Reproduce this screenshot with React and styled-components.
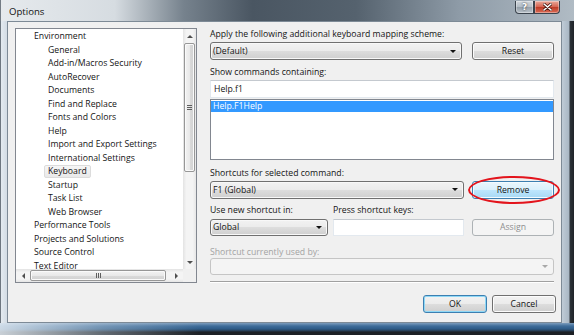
import styled, { createGlobalStyle } from 'styled-components';

const GlobalStyle = createGlobalStyle`
  html, body {
    margin: 0;
    padding: 0;
    background: #22272d;
  }
  body {
    font-family: "Open Sans", "Noto Sans", sans-serif;
    font-size: 8.7px;
    color: #141414;
  }
  * { box-sizing: border-box; }
`;

const Window = styled.div`
  width: 574px;
  height: 335px;
  display: flex;
  flex-direction: column;
  overflow: hidden;
`;

const TitleBar = styled.div`
  height: 21px;
  flex: none;
  display: flex;
  align-items: flex-start;
  background: linear-gradient(90deg, #e6eaed 0%, #d6dce1 20%, #76828d 32%, #4a5662 44%, #55626e 62%, #8e9ba7 80%, #b0bbc4 100%);
  box-shadow: inset 1px 0 0 #737c85;
`;

const Title = styled.div`
  flex: 1;
  margin: 5px 0 0 9px;
  font-size: 9.6px;
  line-height: 13px;
  color: #111;
`;

const CaptionGroup = styled.div`
  display: flex;
  margin: 1px 14px 0 0;
`;

const CaptionButton = styled.div`
  width: ${p => p.$w}px;
  height: 13px;
  display: flex;
  align-items: center;
  justify-content: center;
  border: 1px solid #3a434d;
  border-top: none;
  border-radius: ${p => (p.$close ? '0 0 4px 0' : '0 0 0 4px')};
  background: ${p =>
    p.$close
      ? 'linear-gradient(#e9aa9b, #d5624f 50%, #bd3a25 51%, #d96b55)'
      : 'linear-gradient(rgba(255,255,255,.5), rgba(255,255,255,.2) 50%, rgba(0,0,0,.08) 51%, rgba(255,255,255,.25))'};
  box-shadow: inset 0 0 0 1px rgba(255, 255, 255, 0.35);
  color: #fff;
  font-family: "DejaVu Sans", sans-serif;
  font-weight: bold;
  font-size: 9px;
  text-shadow: 0 0 2px #222;
`;

const Middle = styled.div`
  flex: 1;
  display: flex;
  min-height: 0;
`;

const LeftEdge = styled.div`
  width: 7px;
  background: linear-gradient(90deg, #6e7780 0 1px, #e4eaf0 1px, #d3dce4);
`;

const RightEdge = styled.div`
  width: 12px;
  background: linear-gradient(90deg, #bfcbd6 0, #a9b7c4 7px, #2d3339 8px, #1f2328);
`;

const BottomEdge = styled.div`
  height: 12px;
  flex: none;
  background:
    linear-gradient(90deg, rgba(230, 238, 245, 0.85) 0, rgba(200, 215, 228, 0.4) 18%, rgba(0, 0, 0, 0) 35%),
    linear-gradient(#7c9cbc 0, #3f6d9a 3px, #2d5a86 6px, #26394d 8px, #1c2025 9px);
`;

const Client = styled.div`
  flex: 1;
  border: 1px solid #7d8a96;
  background: #f0f0f0;
  padding: 6px 0 0 7px;
  display: grid;
  grid-template-columns: 182px 344px;
  grid-template-rows: 255px auto;
  column-gap: 13px;
  align-content: start;
`;

/* ---------- tree ---------- */

const TreeBox = styled.div`
  border: 1px solid #828790;
  background: #fff;
  display: grid;
  grid-template-columns: 167px 13px;
  grid-template-rows: 240px 13px;
  overflow: hidden;
`;

const TreeList = styled.div`
  min-height: 0;
  padding-top: 1px;
`;

const TreeRow = styled.div`
  height: 13.5px;
  display: flex;
  align-items: center;
  padding-left: ${p => (p.$level ? 28 : 14)}px;
  white-space: nowrap;
`;

const TreeText = styled.span`
  display: inline-block;
  height: 13px;
  line-height: 11px;
  padding: 0 3px;
  border: 1px solid ${p => (p.$selected ? '#dcdcdc' : 'transparent')};
  border-radius: 2px;
  background: ${p => (p.$selected ? 'linear-gradient(#f6f6f6, #e9e9e9)' : 'transparent')};
`;

const VScroll = styled.div`
  display: flex;
  flex-direction: column;
  align-items: center;
  background: linear-gradient(90deg, #e3e3e3, #f4f4f4 25%, #f4f4f4 75%, #e6e6e6);
`;

const HScroll = styled.div`
  position: relative;
  display: flex;
  align-items: center;
  background: linear-gradient(#e3e3e3, #f4f4f4 25%, #f4f4f4 75%, #e6e6e6);
`;

const ScrollCorner = styled.div`
  background: #f0f0f0;
`;

const ArrowCell = styled.div`
  flex: none;
  width: ${p => (p.$horizontal ? 14 : 13)}px;
  height: ${p => (p.$horizontal ? 13 : 14)}px;
  display: flex;
  align-items: center;
  justify-content: center;
`;

const Triangle = styled.div`
  width: 0;
  height: 0;
  border: 3px solid transparent;
  ${p => p.$dir === 'up' && 'border-bottom: 3px solid #4f4f4f; border-top-width: 0;'}
  ${p => p.$dir === 'down' && 'border-top: 3px solid #4f4f4f; border-bottom-width: 0;'}
  ${p => p.$dir === 'left' && 'border-right: 3px solid #4f4f4f; border-left-width: 0;'}
  ${p => p.$dir === 'right' && 'border-left: 3px solid #4f4f4f; border-right-width: 0;'}
`;

const Thumb = styled.div`
  flex: none;
  display: flex;
  align-items: center;
  justify-content: center;
  border: 1px solid #979797;
  border-radius: 2px;
  width: ${p => (p.$horizontal ? `${p.$len}px` : '11px')};
  height: ${p => (p.$horizontal ? '11px' : `${p.$len}px`)};
  background: ${p =>
    p.$horizontal
      ? 'linear-gradient(#f3f3f3, #e9e9e9 50%, #dadada 51%, #d2d2d2)'
      : 'linear-gradient(90deg, #f3f3f3, #e9e9e9 50%, #dadada 51%, #d2d2d2)'};
  box-shadow: inset 0 0 0 1px #fafafa;
`;

const Grip = styled.div`
  width: 5px;
  height: 5px;
  background: ${p =>
    p.$horizontal
      ? 'repeating-linear-gradient(90deg, #5e5e5e 0 1px, transparent 1px 2px)'
      : 'repeating-linear-gradient(#5e5e5e 0 1px, transparent 1px 2px)'};
`;

const Spacer = styled.div`
  flex: 1;
`;

/* ---------- right side ---------- */

const Panel = styled.div`
  display: flex;
  flex-direction: column;
`;

const Label = styled.div`
  height: 12px;
  line-height: 12px;
  margin-top: ${p => p.$top || 0}px;
  margin-bottom: ${p => p.$bottom ?? 2}px;
  width: ${p => (p.$w ? `${p.$w}px` : 'auto')};
  color: ${p => (p.$disabled ? '#a3a3a3' : '#141414')};
  white-space: nowrap;
`;

const Row = styled.div`
  display: flex;
  gap: ${p => p.$gap ?? 8}px;
  height: ${p => p.$h ?? 18}px;
  margin-top: ${p => p.$top || 0}px;
  margin-bottom: ${p => p.$bottom || 0}px;
`;

const Combo = styled.div`
  flex: ${p => (p.$w ? 'none' : 1)};
  width: ${p => (p.$w ? `${p.$w}px` : 'auto')};
  height: ${p => p.$h ?? 18}px;
  display: flex;
  align-items: center;
  justify-content: space-between;
  padding: 0 5px 0 2px;
  border: 1px solid ${p => (p.$disabled ? '#c5c5c5' : '#707070')};
  border-radius: 3px;
  background: ${p =>
    p.$disabled
      ? '#f4f4f4'
      : 'linear-gradient(#f2f2f2, #ebebeb 50%, #dddddd 50%, #cfcfcf)'};
  box-shadow: inset 0 0 0 1px ${p => (p.$disabled ? '#f4f4f4' : '#f8f8f8')};
  white-space: nowrap;
`;

const DropArrow = styled.div`
  width: 0;
  height: 0;
  border-left: 3px solid transparent;
  border-right: 3px solid transparent;
  border-top: 3px solid ${p => (p.$disabled ? '#a8a8a8' : '#111')};
`;

const TextBox = styled.div`
  flex: ${p => (p.$w ? 'none' : 1)};
  width: ${p => (p.$w ? `${p.$w}px` : 'auto')};
  height: ${p => p.$h ?? 18}px;
  display: flex;
  align-items: center;
  padding-left: 3px;
  background: #fff;
  border: 1px solid #e3e9ef;
  border-top-color: #c4c9cf;
`;

const ListBox = styled.div`
  height: 61px;
  margin-top: 1px;
  border: 1px solid #828790;
  background: #fff;
  padding-top: 1px;
`;

const ListItem = styled.div`
  height: 11px;
  line-height: 11px;
  padding-left: 2px;
  background: ${p => (p.$selected ? '#3399ff' : 'transparent')};
  color: ${p => (p.$selected ? '#fff' : '#141414')};
`;

const variants = {
  normal: {
    border: '#707070',
    bg: 'linear-gradient(#f2f2f2, #ebebeb 50%, #dddddd 50%, #cfcfcf)',
    inner: '#fcfcfc',
    color: '#141414',
  },
  hot: {
    border: '#3c7fb1',
    bg: 'linear-gradient(#eaf6fd, #d9f0fc 50%, #bee6fd 50%, #a7d9f5)',
    inner: '#f4fbff',
    color: '#141414',
  },
  default: {
    border: '#3c7fb1',
    bg: 'linear-gradient(#f2f2f2, #ebebeb 50%, #dddddd 50%, #cfcfcf)',
    inner: '#8fd8f6',
    color: '#141414',
  },
  disabled: {
    border: '#adb2b5',
    bg: '#f4f4f4',
    inner: '#f4f4f4',
    color: '#8f8f8f',
  },
};

const Button = styled.div`
  flex: none;
  width: ${p => p.$w ?? 82}px;
  height: ${p => p.$h ?? 18}px;
  margin-left: ${p => p.$left || 0}px;
  display: flex;
  align-items: center;
  justify-content: center;
  border: 1px solid ${p => variants[p.$variant || 'normal'].border};
  border-radius: 3px;
  background: ${p => variants[p.$variant || 'normal'].bg};
  box-shadow: inset 0 0 0 1px ${p => variants[p.$variant || 'normal'].inner};
  color: ${p => variants[p.$variant || 'normal'].color};
`;

const Marked = styled.div`
  position: relative;
  flex: none;
`;

const RedRing = styled.div`
  position: absolute;
  left: -4px;
  top: -5px;
  width: 92px;
  height: 28px;
  border: 2px solid #e3141c;
  border-radius: 50%;
  pointer-events: none;
`;

const Separator = styled.div`
  margin-top: 6px;
  height: 2px;
  border-top: 1px solid #a0a0a0;
  border-bottom: 1px solid #ffffff;
`;

const Footer = styled.div`
  grid-column: 1 / -1;
  display: flex;
  justify-content: flex-end;
  gap: 5px;
  margin: 12px -2px 0 0;
`;

const tree = [
  { label: 'Environment', level: 0 },
  { label: 'General', level: 1 },
  { label: 'Add-in/Macros Security', level: 1 },
  { label: 'AutoRecover', level: 1 },
  { label: 'Documents', level: 1 },
  { label: 'Find and Replace', level: 1 },
  { label: 'Fonts and Colors', level: 1 },
  { label: 'Help', level: 1 },
  { label: 'Import and Export Settings', level: 1 },
  { label: 'International Settings', level: 1 },
  { label: 'Keyboard', level: 1, selected: true },
  { label: 'Startup', level: 1 },
  { label: 'Task List', level: 1 },
  { label: 'Web Browser', level: 1 },
  { label: 'Performance Tools', level: 0 },
  { label: 'Projects and Solutions', level: 0 },
  { label: 'Source Control', level: 0 },
  { label: 'Text Editor', level: 0 },
];

const CloseGlyph = () => (
  <svg width="9" height="8" viewBox="0 0 9 8">
    <path d="M1 1 L8 7 M8 1 L1 7" stroke="#4a1a12" strokeWidth="3" strokeLinecap="round" />
    <path d="M1 1 L8 7 M8 1 L1 7" stroke="#fff" strokeWidth="1.6" strokeLinecap="round" />
  </svg>
);

export default function App() {
  return (
    <>
      <GlobalStyle />
      <Window>
        <TitleBar>
          <Title>Options</Title>
          <CaptionGroup>
            <CaptionButton $w={19}>?</CaptionButton>
            <CaptionButton $w={26} $close>
              <CloseGlyph />
            </CaptionButton>
          </CaptionGroup>
        </TitleBar>

        <Middle>
          <LeftEdge />
          <Client>
            <TreeBox>
              <TreeList>
                {tree.map(item => (
                  <TreeRow key={item.label} $level={item.level}>
                    <TreeText $selected={item.selected}>{item.label}</TreeText>
                  </TreeRow>
                ))}
              </TreeList>
              <VScroll>
                <ArrowCell>
                  <Triangle $dir="up" />
                </ArrowCell>
                <Thumb $len={129}>
                  <Grip />
                </Thumb>
                <Spacer />
                <ArrowCell>
                  <Triangle $dir="down" />
                </ArrowCell>
              </VScroll>
              <HScroll>
                <ArrowCell $horizontal>
                  <Triangle $dir="left" />
                </ArrowCell>
                <Thumb $horizontal $len={136}>
                  <Grip $horizontal />
                </Thumb>
                <Spacer />
                <ArrowCell $horizontal>
                  <Triangle $dir="right" />
                </ArrowCell>
              </HScroll>
              <ScrollCorner />
            </TreeBox>

            <Panel>
              <Label>Apply the following additional keyboard mapping scheme:</Label>
              <Row $gap={10}>
                <Combo>
                  (Default)
                  <DropArrow />
                </Combo>
                <Button>Reset</Button>
              </Row>

              <Label $top={6}>Show commands containing:</Label>
              <TextBox>Help.f1</TextBox>
              <ListBox>
                <ListItem $selected>Help.F1Help</ListItem>
              </ListBox>

              <Label $top={7}>Shortcuts for selected command:</Label>
              <Row>
                <Combo>
                  F1 (Global)
                  <DropArrow />
                </Combo>
                <Marked>
                  <Button $variant="hot">Remove</Button>
                  <RedRing />
                </Marked>
              </Row>

              <Row $gap={5} $h={12} $top={5} $bottom={3}>
                <Label $w={118} $bottom={0}>Use new shortcut in:</Label>
                <Label $bottom={0}>Press shortcut keys:</Label>
              </Row>
              <Row $gap={5} $h={17}>
                <Combo $w={118} $h={17}>
                  Global
                  <DropArrow />
                </Combo>
                <TextBox $w={131} $h={17} />
                <Button $variant="disabled" $h={17} $left={3}>
                  Assign
                </Button>
              </Row>

              <Label $top={10} $bottom={0} $disabled>
                Shortcut currently used by:
              </Label>
              <Combo $h={17} $disabled>
                <span />
                <DropArrow $disabled />
              </Combo>
              <Separator />
            </Panel>

            <Footer>
              <Button $variant="default" $w={64}>OK</Button>
              <Button $w={64}>Cancel</Button>
            </Footer>
          </Client>
          <RightEdge />
        </Middle>
        <BottomEdge />
      </Window>
    </>
  );
}
